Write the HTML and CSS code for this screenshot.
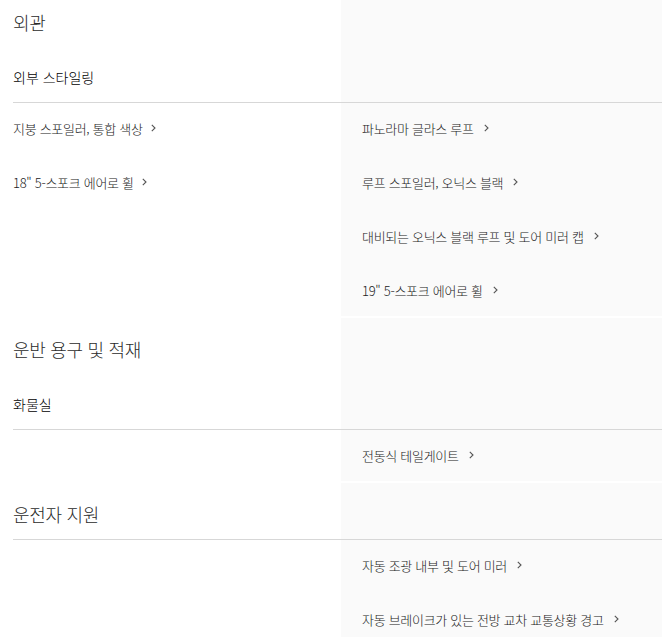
FILE: index.html
```html
<!DOCTYPE html>
<html lang="ko">
<head>
<meta charset="utf-8">
<link rel="stylesheet" href="styles.css">
</head>
<body>
<main class="page">
  <section class="section section--first">
    <div class="head">
      <h2 class="title">외관</h2>
      <h3 class="subtitle">외부 스타일링</h3>
    </div>
    <div class="head-side"></div>
    <hr class="divider">
    <ul class="items items--left">
      <li class="item">지붕 스포일러, 통합 색상<svg class="chev" viewBox="0 0 5 8" width="5" height="8"><polyline points="0.8,0.8 4,4 0.8,7.2"/></svg></li>
      <li class="item">18" 5-스포크 에어로 휠<svg class="chev" viewBox="0 0 5 8" width="5" height="8"><polyline points="0.8,0.8 4,4 0.8,7.2"/></svg></li>
    </ul>
    <ul class="items items--right">
      <li class="item">파노라마 글라스 루프<svg class="chev" viewBox="0 0 5 8" width="5" height="8"><polyline points="0.8,0.8 4,4 0.8,7.2"/></svg></li>
      <li class="item">루프 스포일러, 오닉스 블랙<svg class="chev" viewBox="0 0 5 8" width="5" height="8"><polyline points="0.8,0.8 4,4 0.8,7.2"/></svg></li>
      <li class="item">대비되는 오닉스 블랙 루프 및 도어 미러 캡<svg class="chev" viewBox="0 0 5 8" width="5" height="8"><polyline points="0.8,0.8 4,4 0.8,7.2"/></svg></li>
      <li class="item">19" 5-스포크 에어로 휠<svg class="chev" viewBox="0 0 5 8" width="5" height="8"><polyline points="0.8,0.8 4,4 0.8,7.2"/></svg></li>
    </ul>
  </section>

  <section class="section">
    <div class="head">
      <h2 class="title">운반 용구 및 적재</h2>
      <h3 class="subtitle">화물실</h3>
    </div>
    <div class="head-side"></div>
    <hr class="divider">
    <ul class="items items--left"></ul>
    <ul class="items items--right">
      <li class="item">전동식 테일게이트<svg class="chev" viewBox="0 0 5 8" width="5" height="8"><polyline points="0.8,0.8 4,4 0.8,7.2"/></svg></li>
    </ul>
  </section>

  <section class="section">
    <div class="head">
      <h2 class="title">운전자 지원</h2>
    </div>
    <div class="head-side"></div>
    <hr class="divider">
    <ul class="items items--left"></ul>
    <ul class="items items--right">
      <li class="item">자동 조광 내부 및 도어 미러<svg class="chev" viewBox="0 0 5 8" width="5" height="8"><polyline points="0.8,0.8 4,4 0.8,7.2"/></svg></li>
      <li class="item">자동 브레이크가 있는 전방 교차 교통상황 경고<svg class="chev" viewBox="0 0 5 8" width="5" height="8"><polyline points="0.8,0.8 4,4 0.8,7.2"/></svg></li>
    </ul>
  </section>
</main>
</body>
</html>
```

FILE: styles.css
```css
* { box-sizing: border-box; }

html, body {
  margin: 0;
  padding: 0;
  background: #ffffff;
}

body {
  font-family: "Noto Sans CJK KR", "Noto Sans", sans-serif;
  color: #333333;
  overflow: hidden;
}

.page {
  display: flex;
  flex-direction: column;
  gap: 2px;
}

.section {
  display: grid;
  grid-template-columns: 341px 1fr;
  background: linear-gradient(to right, #ffffff 341px, #fafafa 341px);
}

.section--first {
  margin-top: -9px;
}

.head {
  padding: 19px 0 13px 13px;
}

.title {
  margin: 0;
  font-size: 18px;
  line-height: 24px;
  font-weight: 300;
  letter-spacing: -0.3px;
  color: #2b2b2b;
}

.subtitle {
  margin: 31px 0 0;
  font-size: 14px;
  line-height: 24px;
  font-weight: 300;
  letter-spacing: 0;
  color: #000000;
}

.divider {
  grid-column: 1 / -1;
  margin: 0 0 0 13px;
  border: 0;
  height: 1px;
  background: #d7d7d7;
}

.items {
  list-style: none;
  margin: 0;
  padding: 0 0 1px;
  display: flex;
  flex-direction: column;
  gap: 4px;
}

.items--left { padding-left: 13px; }
.items--right { padding-left: 21px; }

.item {
  height: 50px;
  display: flex;
  align-items: center;
  font-size: 13px;
  font-weight: 300;
  letter-spacing: -0.3px;
  color: #222222;
}

.chev {
  flex: none;
  margin-left: 8px;
  fill: none;
  stroke: #555555;
  stroke-width: 1.1;
}

.items--right .chev { margin-left: 10px; }
```
